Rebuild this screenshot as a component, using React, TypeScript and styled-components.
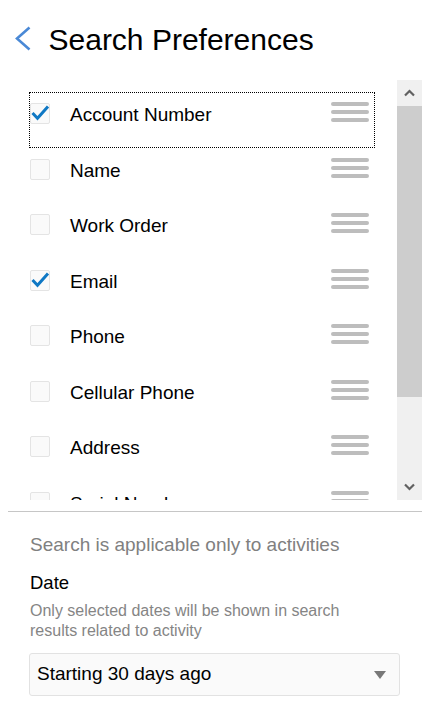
import React from "react";
import styled, { createGlobalStyle } from "styled-components";

const Global = createGlobalStyle`
  html, body { margin: 0; padding: 0; background: #fff; }
  body { font-family: "Liberation Sans", Arial, sans-serif; color: #000; }
  * { box-sizing: border-box; }
`;

const Page = styled.div`
  width: 430px;
  height: 705px;
  overflow: hidden;
  display: flex;
  flex-direction: column;
`;

const Header = styled.header`
  height: 80px;
  display: flex;
  align-items: flex-start;
  padding: 23px 0 0 14px;
`;

const BackButton = styled.button`
  border: 0;
  background: none;
  padding: 0;
  margin-top: 3px;
  width: 17px;
  height: 25px;
  display: flex;
  cursor: pointer;
`;

const Title = styled.h1`
  margin: 0 0 0 17.5px;
  font-size: 30px;
  line-height: 34px;
  font-weight: 400;
  color: #000;
`;

const ListArea = styled.div`
  height: 420px;
  margin-right: 8px;
  display: flex;
`;

const Rows = styled.ul`
  flex: 1;
  list-style: none;
  margin: 0;
  padding: 12px 22px 0 30px;
  overflow: hidden;
`;

const Row = styled.li<{ $focused?: boolean }>`
  height: 55.5px;
  display: flex;
  align-items: flex-start;
  padding: 10px 5px 0 0;
  border: 1px ${(p) => (p.$focused ? "dotted #000" : "solid transparent")};
  border-left: 0;
  ${(p) => (p.$focused ? "border-left: 1px dotted #000; margin-left: -1px;" : "")}
`;

const Box = styled.span`
  position: relative;
  flex: none;
  width: 20px;
  height: 21px;
  border: 1px solid #e4e4e4;
  border-radius: 2px;
  background: #fafafa;
`;

const Check = styled.svg`
  position: absolute;
  left: -1px;
  top: -1px;
  width: 20px;
  height: 21px;
  overflow: visible;
`;

const Label = styled.span`
  flex: 1;
  margin: 1px 0 0 20px;
  font-size: 19px;
  line-height: 21px;
  color: #000;
  white-space: nowrap;
`;

const Handle = styled.span`
  flex: none;
  width: 38px;
  display: flex;
  flex-direction: column;
  gap: 4px;
  margin-top: -1px;
`;

const Bar = styled.span`
  height: 4px;
  border-radius: 2px;
  background: #bdbdbd;
`;

const Scrollbar = styled.div`
  flex: none;
  width: 25px;
  display: flex;
  flex-direction: column;
  background: #f0f0f0;
`;

const ScrollButton = styled.div`
  height: 26px;
  display: flex;
  align-items: center;
  justify-content: center;
`;

const Thumb = styled.div`
  height: 291px;
  background: #cdcdcd;
`;

const Track = styled.div`
  flex: 1;
`;

const Divider = styled.hr`
  margin: 11px 8px 0 8px;
  border: 0;
  height: 1px;
  background: #c6c6c6;
`;

const Footer = styled.section`
  padding: 22px 30px 0 29px;
  display: flex;
  flex-direction: column;
`;

const Note = styled.p`
  margin: 0 0 0 1px;
  font-size: 19px;
  line-height: 22px;
  color: #808080;
`;

const FieldLabel = styled.p`
  margin: 16px 0 0 1px;
  font-size: 18.5px;
  line-height: 22px;
  color: #000;
`;

const Hint = styled.p`
  margin: 7px 0 0 1px;
  max-width: 340px;
  font-size: 16px;
  line-height: 20px;
  color: #858585;
`;

const Select = styled.div`
  margin-top: 11.5px;
  width: 371px;
  height: 43px;
  display: flex;
  align-items: center;
  justify-content: space-between;
  padding: 0 13px 0 7px;
  border: 1px solid #e2e2e2;
  border-radius: 3px;
  background: #fafafa;
  font-size: 19px;
  color: #000;
`;

const Caret = styled.span`
  width: 0;
  height: 0;
  border-left: 6px solid transparent;
  border-right: 6px solid transparent;
  border-top: 8px solid #787878;
  margin-top: 2px;
`;

const items: { label: string; checked?: boolean; focused?: boolean }[] = [
  { label: "Account Number", checked: true, focused: true },
  { label: "Name" },
  { label: "Work Order" },
  { label: "Email", checked: true },
  { label: "Phone" },
  { label: "Cellular Phone" },
  { label: "Address" },
  { label: "Serial Number" },
];

function Arrow({ up }: { up?: boolean }) {
  return (
    <svg width="11" height="8" viewBox="0 0 11 8">
      <path
        d={up ? "M1 6.5 L5.5 2 L10 6.5" : "M1 1.5 L5.5 6 L10 1.5"}
        fill="none"
        stroke="#616161"
        strokeWidth="2.2"
      />
    </svg>
  );
}

export default function App() {
  return (
    <Page>
      <Global />
      <Header>
        <BackButton aria-label="Back">
          <svg width="17" height="25" viewBox="0 0 17 25">
            <path d="M15.5 1.5 L3 12.5 L15.5 23.5" fill="none" stroke="#4a89d6" strokeWidth="2.6" />
          </svg>
        </BackButton>
        <Title>Search Preferences</Title>
      </Header>
      <ListArea>
        <Rows>
          {items.map((it) => (
            <Row key={it.label} $focused={it.focused}>
              <Box>
                {it.checked && (
                  <Check viewBox="0 0 20 21">
                    <path d="M2.5 10 L7.5 15.2 L18 3.5" fill="none" stroke="#0f78c4" strokeWidth="3" />
                  </Check>
                )}
              </Box>
              <Label>{it.label}</Label>
              <Handle>
                <Bar />
                <Bar />
                <Bar />
              </Handle>
            </Row>
          ))}
        </Rows>
        <Scrollbar>
          <ScrollButton>
            <Arrow up />
          </ScrollButton>
          <Thumb />
          <Track />
          <ScrollButton>
            <Arrow />
          </ScrollButton>
        </Scrollbar>
      </ListArea>
      <Divider />
      <Footer>
        <Note>Search is applicable only to activities</Note>
        <FieldLabel>Date</FieldLabel>
        <Hint>Only selected dates will be shown in search results related to activity</Hint>
        <Select>
          <span>Starting 30 days ago</span>
          <Caret />
        </Select>
      </Footer>
    </Page>
  );
}
